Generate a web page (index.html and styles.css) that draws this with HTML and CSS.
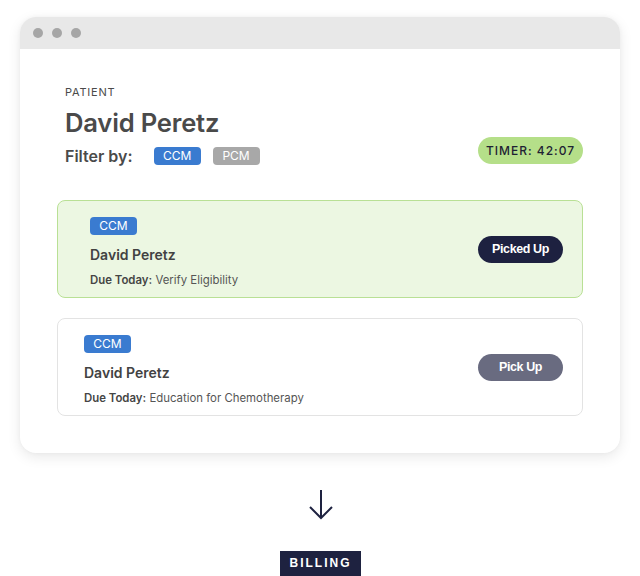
FILE: index.html
```html
<!DOCTYPE html>
<html>
<head>
<meta charset="utf-8">
<link rel="stylesheet" href="styles.css">
</head>
<body>
<div class="window">
  <div class="titlebar">
    <span class="dot"></span><span class="dot"></span><span class="dot"></span>
  </div>
  <div class="content">
    <div class="label">PATIENT</div>
    <div class="name">David Peretz</div>
    <div class="filter-row">
      <div class="filter">
        <span class="filter-label">Filter by:</span>
        <span class="tag tag-blue">CCM</span>
        <span class="tag tag-gray">PCM</span>
      </div>
      <span class="timer">TIMER: 42:07</span>
    </div>
    <div class="card card-active">
      <div class="card-info">
        <span class="tag tag-blue">CCM</span>
        <div class="card-name">David Peretz</div>
        <div class="due"><b>Due Today:</b> Verify Eligibility</div>
      </div>
      <button class="btn btn-dark">Picked Up</button>
    </div>
    <div class="card card-plain">
      <div class="card-info">
        <span class="tag tag-blue">CCM</span>
        <div class="card-name">David Peretz</div>
        <div class="due"><b>Due Today:</b> Education for Chemotherapy</div>
      </div>
      <button class="btn btn-gray">Pick Up</button>
    </div>
  </div>
</div>
<div class="flow">
  <svg class="arrow" width="28" height="32" viewBox="0 0 28 32">
    <path d="M14 2 V30 M3 19 L14 30 L25 19" fill="none" stroke="#1e2240" stroke-width="2"/>
  </svg>
  <div class="billing">BILLING</div>
</div>
</body>
</html>
```
FILE: styles.css
```css
* { box-sizing: border-box; }
html, body { margin: 0; padding: 0; background: #fff; }
body {
  font-family: Inter, "Noto Sans", sans-serif;
  color: #454545;
  width: 640px;
  height: 576px;
  overflow: hidden;
  padding-top: 17px;
}
.window {
  margin-left: 20px;
  width: 600px;
  height: 436px;
  border-radius: 16px;
  background: #fff;
  box-shadow: 0 4px 14px rgba(0,0,0,0.09), 0 0 4px rgba(0,0,0,0.04);
  overflow: hidden;
}
.titlebar {
  height: 32px;
  background: #e8e8e8;
  display: flex;
  align-items: center;
  gap: 9px;
  padding-left: 13px;
}
.dot {
  width: 10px; height: 10px; border-radius: 50%;
  background: #a6a6a6;
}
.content {
  padding: 36px 37px 0 37px;
}
.label {
  margin-left: 8px;
  font-size: 11px;
  letter-spacing: 0.8px;
  color: #4a4a4a;
  line-height: 14px;
}
.name {
  margin-left: 8px;
  margin-top: 9px;
  font-size: 25.6px;
  font-weight: 600;
  color: #4a4a4a;
  line-height: 30px;
  letter-spacing: -0.2px;
}
.filter-row {
  margin-left: 8px;
  margin-top: -3px;
  display: flex;
  align-items: center;
  justify-content: space-between;
}
.filter { display: flex; align-items: center; margin-top: 11px; }
.filter-label {
  font-size: 16px; font-weight: 600; color: #4a4a4a;
  margin-right: 21px;
}
.tag {
  display: inline-block;
  width: 47px;
  height: 18px;
  line-height: 18px;
  text-align: center;
  border-radius: 4px;
  font-size: 12px;
  color: #fff;
}
.tag-blue { background: #3a7bd0; }
.tag-gray { background: #a8a8a8; margin-left: 12px; }
.timer {
  background: #b5df89;
  border-radius: 14px;
  height: 27px;
  width: 105px;
  line-height: 27px;
  text-align: center;
  font-size: 12px;
  letter-spacing: 1px;
  color: #1e2233;
  font-weight: 500;
}
.card {
  margin-top: 34px;
  height: 98px;
  border-radius: 8px;
  display: flex;
  align-items: center;
  justify-content: space-between;
  padding-right: 19px;
}
.card-active {
  background: #ecf7e2;
  border: 1px solid #b9e095;
  padding-left: 32px;
}
.card-plain {
  margin-top: 20px;
  background: #fff;
  border: 1px solid #e3e3e3;
  padding-left: 26px;
}
.card-info {
  display: flex; flex-direction: column; align-items: flex-start;
  align-self: flex-start;
  padding-top: 16px;
}
.card-name {
  margin-top: 10px;
  font-size: 14px; font-weight: 600; color: #424242; line-height: 20px;
}
.due {
  margin-top: 7px;
  font-size: 11.4px; color: #555; line-height: 16px;
}
.due b { font-weight: 600; color: #454545; }
.btn {
  border: none;
  width: 85px;
  height: 27px;
  border-radius: 14px;
  font-family: "Liberation Sans", Arial, sans-serif;
  font-weight: 700;
  font-size: 12.5px;
  letter-spacing: -0.4px;
  color: #fff;
  padding: 0;
}
.btn-dark { background: #1d2140; }
.btn-gray { background: #696b80; }
.flow {
  display: flex; flex-direction: column; align-items: center;
  margin-top: 35px;
}
.arrow { display: block; margin-left: 2px; }
.billing {
  margin-top: 31px;
  margin-left: 1px;
  background: #1e2240;
  color: #fff;
  width: 81px;
  height: 25px;
  line-height: 25px;
  text-align: center;
  font-family: "Liberation Sans", Arial, sans-serif;
  font-weight: 700;
  font-size: 12px;
  letter-spacing: 2px;
}
```
